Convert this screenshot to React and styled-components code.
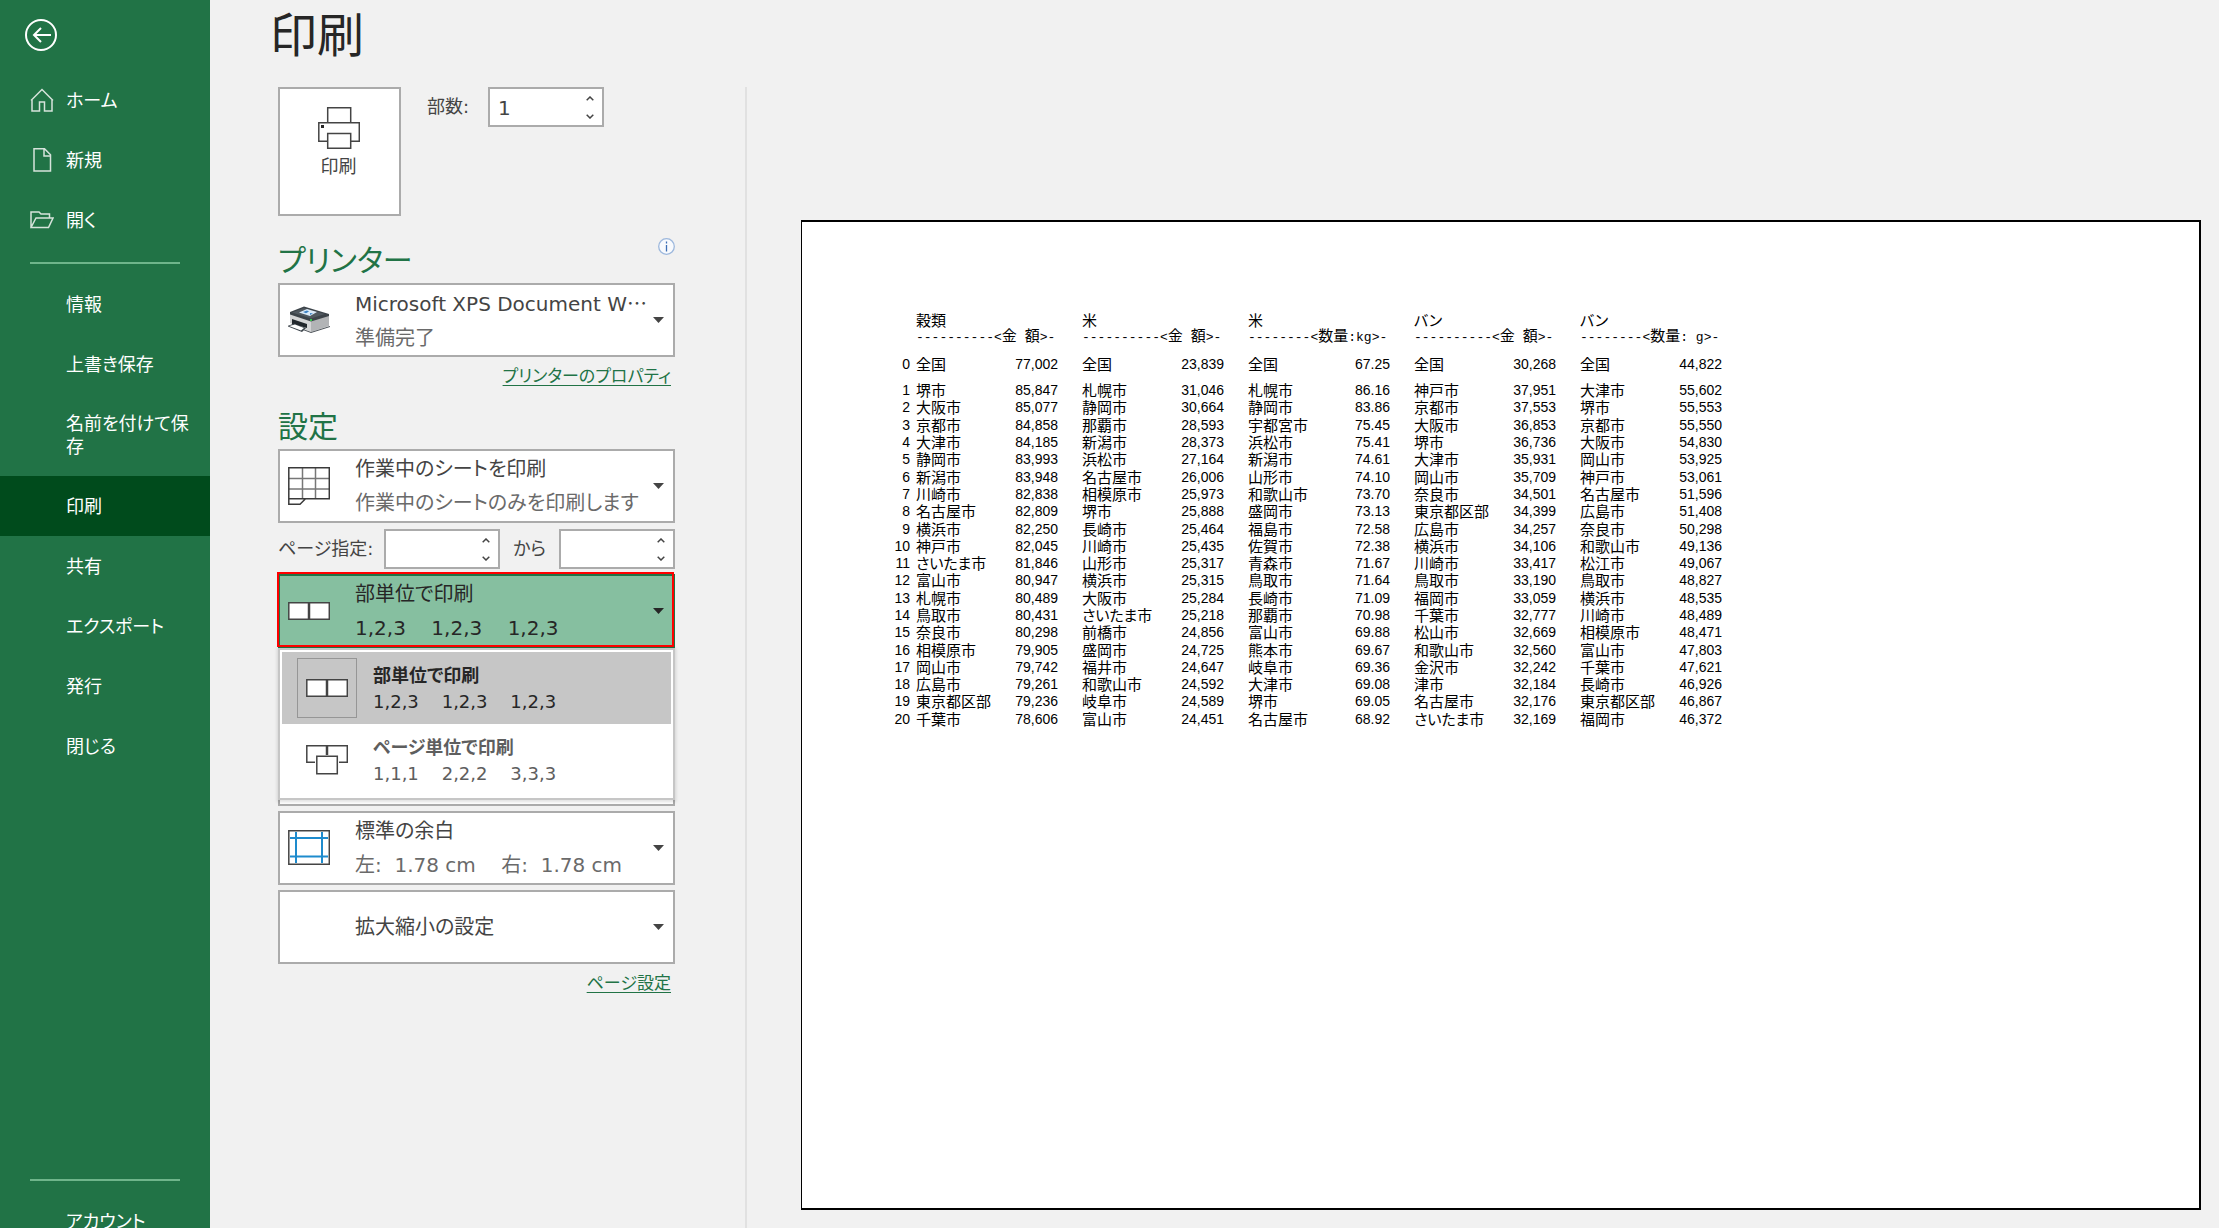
import React, { useState } from "react";
import styled, { createGlobalStyle, css } from "styled-components";

const GlobalStyle = createGlobalStyle`
  * {
    box-sizing: border-box;
  }

  body {
    margin: 0;
    background: #f1f1f1;
    color: #444444;
    font-family: "DejaVu Sans", "Noto Sans CJK JP", sans-serif;
    font-feature-settings: "palt";
  }

  button,
  input {
    font: inherit;
    font-feature-settings: inherit;
    color: inherit;
    margin: 0;
  }
`;

const Page = styled.div`
  display: flex;
  height: 100vh;
  overflow: hidden;
`;

/* ---------- sidebar ---------- */

const Sidebar = styled.nav`
  display: flex;
  flex-direction: column;
  flex: 0 0 210px;
  background: #217346;
  color: #ffffff;
  font-size: 18px;
`;

const BackButton = styled.button`
  width: 32px;
  height: 32px;
  margin: 19px 0 19px 25px;
  padding: 0;
  border: 0;
  background: none;
`;

const NavItem = styled.button`
  display: flex;
  align-items: center;
  width: 100%;
  min-height: 60px;
  padding: 18px 16px 18px 30px;
  border: 0;
  background: ${(props) => (props.$active ? "#004b1c" : "transparent")};
  line-height: 23px;
  text-align: left;
  word-break: break-all;
`;

const NavIcon = styled.span`
  display: flex;
  flex: 0 0 36px;
`;

const NavLine = styled.hr`
  flex: none;
  height: 2px;
  width: 150px;
  margin: 12px 0 10px 30px;
  border: 0;
  background: #6fb58b;
`;

const NavFooter = styled.div`
  margin-top: auto;
  margin-bottom: -23px;
`;

/* ---------- settings column ---------- */

const Main = styled.main`
  display: flex;
  flex-direction: column;
  flex: 1;
  min-width: 0;
`;

const Title = styled.h1`
  margin: 0;
  padding: 0 60px;
  height: 87px;
  color: #262626;
  font-size: 47px;
  font-weight: 400;
  line-height: 72px;
`;

const Columns = styled.div`
  display: flex;
  flex: 1;
  min-height: 0;
`;

const Settings = styled.section`
  flex: 0 0 537px;
  padding: 0 70px 0 68px;
  border-right: 2px solid #e1e1e1;
`;

const PrintRow = styled.div`
  display: flex;
  align-items: flex-start;
`;

const PrintButton = styled.button`
  display: flex;
  flex-direction: column;
  align-items: center;
  width: 123px;
  height: 129px;
  padding: 18px 2px 0 0;
  border: 2px solid #ababab;
  background: #ffffff;
  font-size: 18px;
  line-height: 36px;
`;

const FieldLabel = styled.label`
  font-size: 18px;
  line-height: 40px;
`;

const CopiesLabel = styled(FieldLabel)`
  width: 61px;
  margin-left: 26px;
`;

const RangeLabel = styled(FieldLabel)`
  flex: 0 0 106px;
`;

const ToLabel = styled(FieldLabel)`
  flex: 1;
  text-align: center;
`;

const SpinBox = styled.span`
  display: flex;
  width: 116px;
  height: 40px;
  border: 2px solid #ababab;
  background: #ffffff;
`;

const SpinInput = styled.input`
  flex: 1;
  min-width: 0;
  padding: 2px 8px 0;
  border: 0;
  outline: 0;
  background: none;
  font-size: 20px;
`;

const SpinButtons = styled.span`
  display: flex;
  flex-direction: column;
  width: 24px;
`;

const SpinButton = styled.button`
  display: flex;
  flex: 1;
  align-items: center;
  justify-content: center;
  padding: 0;
  border: 0;
  background: none;
`;

const HeadingRow = styled.div`
  display: flex;
  align-items: flex-start;
  justify-content: space-between;
  margin-top: ${(props) => (props.$tight ? "15px" : "22px")};
`;

const Heading = styled.h2`
  margin: 0;
  color: #217346;
  font-size: 30px;
  font-weight: 400;
  line-height: 45px;
`;

const InfoButton = styled.button`
  display: flex;
  padding: 0;
  border: 0;
  background: none;
`;

const LinkRow = styled.div`
  display: flex;
  justify-content: flex-end;
  padding: 6px 4px 0 0;
`;

const GreenLink = styled.a`
  color: #217346;
  font-size: 17px;
  line-height: 26px;
  text-decoration: underline;
  text-underline-offset: 3px;
`;

const Stack = styled.div`
  display: flex;
  flex-direction: column;
  gap: 5px;
`;

const PickerWrap = styled.div`
  position: relative;
`;

const Picker = styled.button`
  display: flex;
  align-items: center;
  width: 100%;
  height: 74px;
  padding: 0 9px 0 8px;
  border: 2px solid #ababab;
  background: #ffffff;
  text-align: left;
  ${(props) =>
    props.$open &&
    css`
      border-color: #217346;
      background: #86bfa0;
      color: #262626;

      &::after {
        content: "";
        position: absolute;
        inset: -2px 1px 1px -1px;
        border: 2px solid #ff0000;
      }
    `}
`;

const PickerIcon = styled.span`
  display: flex;
  flex: 0 0 67px;
`;

const PickerText = styled.span`
  flex: 1;
  min-width: 0;
  font-size: 20px;
  line-height: 34px;
  white-space: pre;
`;

const PickerTitle = styled.span`
  display: block;
`;

const PickerNote = styled.span`
  display: block;
  color: ${(props) => (props.$open ? "#262626" : "#6a6a6a")};
`;

const Ellipsis = styled.span`
  font-family: "Noto Sans CJK JP", sans-serif;
`;

const PageRange = styled.div`
  display: flex;
  padding-top: 1px;
`;

const Menu = styled.ul`
  position: absolute;
  top: 100%;
  left: 0;
  right: 0;
  z-index: 1;
  margin: 0;
  padding: 2px;
  border: 2px solid #c6c6c6;
  background: #ffffff;
  box-shadow: 0 1px 3px 1px rgba(0, 0, 0, 0.12);
  list-style: none;
`;

const MenuItem = styled.button`
  display: flex;
  align-items: center;
  width: 100%;
  height: 72px;
  padding: 0 15px;
  border: 0;
  background: ${(props) => (props.$selected ? "#c6c6c6" : "#ffffff")};
  color: ${(props) => (props.$selected ? "#262626" : "#5e5e5e")};
  font-size: 18px;
  line-height: 26px;
  text-align: left;
  white-space: pre;
`;

const MenuIcon = styled.span`
  display: flex;
  align-items: center;
  justify-content: center;
  width: 60px;
  height: 60px;
  margin-right: 16px;
  border: 1px solid
    ${(props) => (props.$selected ? "#969696" : "transparent")};
`;

const MenuText = styled.span`
  padding-top: 2px;
`;

const MenuTitle = styled.span`
  display: block;
  font-weight: 700;
`;

/* ---------- preview ---------- */

const Preview = styled.section`
  display: flex;
  flex: 1;
  min-width: 0;
  padding: 133px 18px 18px 54px;
`;

const Paper = styled.div`
  flex: 1;
  padding: 90px 0 0 84px;
  border: solid #000000;
  border-width: 2px 2px 2px 1px;
  background: #ffffff;
`;

const Sheet = styled.table`
  border-collapse: collapse;
  color: #000000;
  font-family: "Liberation Sans", "Noto Sans CJK JP", sans-serif;
  font-size: 15px;
  line-height: 17px;
  white-space: pre;
`;

const Rows = styled.tbody`
  height: 346px;
`;

const TotalRow = styled.tr`
  height: 36px;
`;

const IndexCell = styled.th`
  width: 24px;
  padding: 0;
  font-size: 14px;
  font-weight: 400;
  text-align: right;
`;

const NameCell = styled.td`
  width: 102px;
  padding: 0 0 0 6px;
`;

const ValueCell = styled.td`
  width: 46px;
  padding: 0;
  font-size: 14px;
  text-align: right;
`;

const SpacerCell = styled.td`
  width: 18px;
  padding: 0;
`;

const GroupHead = styled.th`
  padding: 0 0 0 6px;
  font-weight: 400;
  text-align: left;
`;

const RuleHead = styled(GroupHead)`
  font-family: "Liberation Mono", "Noto Sans CJK JP", monospace;
  font-size: 13px;
`;

const Kanji = styled.span`
  font-size: 15px;
`;

/* ---------- icons ---------- */

const BackIcon = () => (
  <svg width="32" height="32" fill="none" stroke="#fff" strokeWidth="2">
    <circle cx="16" cy="16" r="15" />
    <path d="M26 16H9M16 9l-7 7 7 7" />
  </svg>
);

const HomeIcon = () => (
  <svg width="24" height="24" fill="none" stroke="#d6e3db" strokeWidth="1.5">
    <path d="M1 12.5 12 1.5l11 11M2 11.5V23h7.5V14h5v9H22V11.5" />
  </svg>
);

const NewIcon = () => (
  <svg width="24" height="24" fill="none" stroke="#d6e3db" strokeWidth="1.5">
    <path d="M4 .8h10.5l6 6V23H4zM14 1v7h6.5" />
  </svg>
);

const OpenIcon = () => (
  <svg width="24" height="18" fill="none" stroke="#d6e3db" strokeWidth="1.5">
    <path d="M1 16V1h8l2 2h8.500v4M1 16.500 6 7h17l-4.500 9.500z" />
  </svg>
);

const PrintIcon = () => (
  <svg width="42" height="42" fill="#fff" stroke="#444" strokeWidth="1.5">
    <path d="M9.700 16V.8h23V16" />
    <path d="M.8 15.700h40.500v18.500H.8z" />
    <path d="M9.700 26.500h23v14.700h-23z" />
    <path d="M3 18h3v3H3z" fill="#262626" stroke="none" />
  </svg>
);

const DeviceIcon = () => (
  <svg width="44" height="28" viewBox="2 0 44 28">
    <path d="M4 8v9l21 9V14z" fill="#d4d5d6" />
    <path d="M25 14v12l18-6V9z" fill="#b2b4b6" />
    <path d="m25 26 19-6v1l-19 6-8-3v-1z" fill="#4a5056" />
    <path d="M4 6 18 .5 43 8v2l-18 5.500L4 8.500z" fill="#3c4349" />
    <path d="m6 6.500 12-4.500 21 6-14 4.500z" fill="#50585f" />
    <path d="m13 6.500 8-3.500 10 3-7 4z" fill="#dbeaf8" />
    <path d="m17 6 4-1.500 2 1-3 1.700zM24 7l3 .5-3 1.500z" fill="#3d82c4" />
    <path d="M6 13v5l15 4v-4z" fill="#22282d" />
    <path d="m1 20 7-2.500 12 4.500-4 4z" fill="#3a4249" />
    <path d="m3 20 6-1.500 9 3.500-3 2.500z" fill="#fff" />
    <path d="M24 13h2v2h-2z" fill="#35c44a" />
  </svg>
);

const SheetIcon = () => (
  <svg width="42" height="38" fill="none" strokeWidth="1.5">
    <path d="M14.500 1v31M27.500 1v31M1 11.500h40M1 22h40" stroke="#777" />
    <path d="M.8 .8h40.500v31H.8zM.8 32v5.200H12l5.500-5.500" stroke="#3a3a3a" />
  </svg>
);

const CollatedIcon = () => (
  <svg width="42" height="18" fill="#fff" stroke="#444" strokeWidth="1.5">
    <path d="M.8 .8h40.500v16.500H.8z" />
    <path d="M21 1v16" strokeWidth="2.5" />
  </svg>
);

const UncollatedIcon = () => (
  <svg width="42" height="30" fill="#fff" stroke="#444" strokeWidth="1.5">
    <path d="M9 17.200H.8V.8h40.500v16.500H33" />
    <path d="M21 1v9" strokeWidth="2.5" />
    <path d="M10.800 11.300h20.500v17.500H10.800z" />
  </svg>
);

const MarginsIcon = () => (
  <svg width="42" height="36" fill="none" strokeWidth="1.5">
    <path d="M8 2v31M34 2v31M2 8h38M2 26.500h38" stroke="#1e8bcd" strokeWidth="2" />
    <path d="M.8 .8h40.500v33.500H.8z" stroke="#444" />
  </svg>
);

const InfoIcon = () => (
  <svg width="17" height="17" fill="none" stroke="#9db8dd">
    <circle cx="8.5" cy="8.5" r="7.8" fill="#f8fafd" strokeWidth="1.3" />
    <path d="M8.500 3.500v2M8.500 7v6.500" stroke="#3c6eb4" strokeWidth="1.3" />
  </svg>
);

const CaretIcon = () => (
  <svg width="11" height="6">
    <path d="M0 0h11L5.500 6z" fill="currentColor" />
  </svg>
);

const ChevronIcon = ({ up }) => (
  <svg width="8" height="5" fill="none" stroke="#444" strokeWidth="1.5">
    <path d={up ? "M.7 4.300 4 1l3.300 3.300" : "M.7 .7 4 4 7.300 .7"} />
  </svg>
);

/* ---------- data ---------- */

const mainNav = [
  { label: "ホーム", icon: <HomeIcon /> },
  { label: "新規", icon: <NewIcon /> },
  { label: "開く", icon: <OpenIcon /> },
];

const fileNav = [
  "情報",
  "上書き保存",
  "名前を付けて保存",
  "印刷",
  "共有",
  "エクスポート",
  "発行",
  "閉じる",
];

const collateOptions = [
  {
    title: "部単位で印刷",
    note: "1,2,3    1,2,3    1,2,3",
    icon: <CollatedIcon />,
  },
  {
    title: "ページ単位で印刷",
    note: "1,1,1    2,2,2    3,3,3",
    icon: <UncollatedIcon />,
  },
];

const groups = [
  { name: "穀類", rule: ["----------<", "金", " ", "額", ">-"] },
  { name: "米", rule: ["----------<", "金", " ", "額", ">-"] },
  { name: "米", rule: ["--------<", "数量", ":kg>-"] },
  { name: "バン", rule: ["----------<", "金", " ", "額", ">-"] },
  { name: "バン", rule: ["--------<", "数量", ": g>-"] },
];

const total = "全国 77,002 全国 23,839 全国 67.25 全国 30,268 全国 44,822";

const ranking = [
  "堺市 85,847 札幌市 31,046 札幌市 86.16 神戸市 37,951 大津市 55,602",
  "大阪市 85,077 静岡市 30,664 静岡市 83.86 京都市 37,553 堺市 55,553",
  "京都市 84,858 那覇市 28,593 宇都宮市 75.45 大阪市 36,853 京都市 55,550",
  "大津市 84,185 新潟市 28,373 浜松市 75.41 堺市 36,736 大阪市 54,830",
  "静岡市 83,993 浜松市 27,164 新潟市 74.61 大津市 35,931 岡山市 53,925",
  "新潟市 83,948 名古屋市 26,006 山形市 74.10 岡山市 35,709 神戸市 53,061",
  "川崎市 82,838 相模原市 25,973 和歌山市 73.70 奈良市 34,501 名古屋市 51,596",
  "名古屋市 82,809 堺市 25,888 盛岡市 73.13 東京都区部 34,399 広島市 51,408",
  "横浜市 82,250 長崎市 25,464 福島市 72.58 広島市 34,257 奈良市 50,298",
  "神戸市 82,045 川崎市 25,435 佐賀市 72.38 横浜市 34,106 和歌山市 49,136",
  "さいたま市 81,846 山形市 25,317 青森市 71.67 川崎市 33,417 松江市 49,067",
  "富山市 80,947 横浜市 25,315 鳥取市 71.64 鳥取市 33,190 鳥取市 48,827",
  "札幌市 80,489 大阪市 25,284 長崎市 71.09 福岡市 33,059 横浜市 48,535",
  "鳥取市 80,431 さいたま市 25,218 那覇市 70.98 千葉市 32,777 川崎市 48,489",
  "奈良市 80,298 前橋市 24,856 富山市 69.88 松山市 32,669 相模原市 48,471",
  "相模原市 79,905 盛岡市 24,725 熊本市 69.67 和歌山市 32,560 富山市 47,803",
  "岡山市 79,742 福井市 24,647 岐阜市 69.36 金沢市 32,242 千葉市 47,621",
  "広島市 79,261 和歌山市 24,592 大津市 69.08 津市 32,184 長崎市 46,926",
  "東京都区部 79,236 岐阜市 24,589 堺市 69.05 名古屋市 32,176 東京都区部 46,867",
  "千葉市 78,606 富山市 24,451 名古屋市 68.92 さいたま市 32,169 福岡市 46,372",
];

/* ---------- parts ---------- */

const Spinner = ({ id, initial = "" }) => {
  const [value, setValue] = useState(initial);
  const step = (by) => setValue(String(Math.max(1, Number(value) + by)));

  return (
    <SpinBox>
      <SpinInput
        id={id}
        value={value}
        onChange={(e) => setValue(e.target.value)}
      />
      <SpinButtons>
        <SpinButton aria-label="増やす" onClick={() => step(1)}>
          <ChevronIcon up />
        </SpinButton>
        <SpinButton aria-label="減らす" onClick={() => step(-1)}>
          <ChevronIcon />
        </SpinButton>
      </SpinButtons>
    </SpinBox>
  );
};

const SettingPicker = ({ icon, title, note, open, onClick }) => (
  <Picker $open={open} aria-haspopup="listbox" onClick={onClick}>
    <PickerIcon>{icon}</PickerIcon>
    <PickerText>
      <PickerTitle>{title}</PickerTitle>
      {note && <PickerNote $open={open}>{note}</PickerNote>}
    </PickerText>
    <CaretIcon />
  </Picker>
);

const SheetRow = ({ as: Row = "tr", index, line }) => {
  const cells = line.split(" ");

  return (
    <Row>
      <IndexCell scope="row">{index}</IndexCell>
      {groups.map((group, i) => (
        <React.Fragment key={i}>
          <NameCell>{cells[i * 2]}</NameCell>
          <ValueCell>{cells[i * 2 + 1]}</ValueCell>
          <SpacerCell />
        </React.Fragment>
      ))}
    </Row>
  );
};

const SheetTable = () => (
  <Sheet>
    <thead>
      <tr>
        <td />
        {groups.map((group, i) => (
          <GroupHead key={i} colSpan={3}>
            {group.name}
          </GroupHead>
        ))}
      </tr>
      <tr>
        <td />
        {groups.map((group, i) => (
          <RuleHead key={i} colSpan={3}>
            {group.rule.map((part, j) =>
              j % 2 ? <Kanji key={j}>{part}</Kanji> : part
            )}
          </RuleHead>
        ))}
      </tr>
      <SheetRow as={TotalRow} index={0} line={total} />
    </thead>
    <Rows>
      {ranking.map((line, i) => (
        <SheetRow key={i} index={i + 1} line={line} />
      ))}
    </Rows>
  </Sheet>
);

const App = () => {
  const [active, setActive] = useState("印刷");
  const [menuOpen, setMenuOpen] = useState(true);
  const [collate, setCollate] = useState(0);
  const current = collateOptions[collate];

  return (
    <Page lang="ja">
      <GlobalStyle />
      <Sidebar>
        <BackButton aria-label="戻る">
          <BackIcon />
        </BackButton>
        {mainNav.map((item) => (
          <NavItem key={item.label}>
            <NavIcon>{item.icon}</NavIcon>
            {item.label}
          </NavItem>
        ))}
        <NavLine />
        {fileNav.map((label) => (
          <NavItem
            key={label}
            $active={label === active}
            onClick={() => setActive(label)}
          >
            <NavIcon />
            {label}
          </NavItem>
        ))}
        <NavFooter>
          <NavLine />
          <NavItem>
            <NavIcon />
            アカウント
          </NavItem>
        </NavFooter>
      </Sidebar>

      <Main>
        <Title>印刷</Title>
        <Columns>
          <Settings>
            <PrintRow>
              <PrintButton>
                <PrintIcon />
                印刷
              </PrintButton>
              <CopiesLabel htmlFor="copies">部数:</CopiesLabel>
              <Spinner id="copies" initial="1" />
            </PrintRow>

            <HeadingRow>
              <Heading>プリンター</Heading>
              <InfoButton aria-label="プリンターの状態">
                <InfoIcon />
              </InfoButton>
            </HeadingRow>
            <SettingPicker
              icon={<DeviceIcon />}
              title={
                <>
                  Microsoft XPS Document W<Ellipsis>…</Ellipsis>
                </>
              }
              note="準備完了"
            />
            <LinkRow>
              <GreenLink href="#printer">プリンターのプロパティ</GreenLink>
            </LinkRow>

            <HeadingRow $tight>
              <Heading>設定</Heading>
            </HeadingRow>
            <Stack>
              <SettingPicker
                icon={<SheetIcon />}
                title="作業中のシートを印刷"
                note="作業中のシートのみを印刷します"
              />
              <PageRange>
                <RangeLabel htmlFor="from">ページ指定:</RangeLabel>
                <Spinner id="from" />
                <ToLabel htmlFor="to">から</ToLabel>
                <Spinner id="to" />
              </PageRange>
              <PickerWrap>
                <SettingPicker
                  icon={<CollatedIcon />}
                  title={current.title}
                  note={current.note}
                  open={menuOpen}
                  onClick={() => setMenuOpen(!menuOpen)}
                />
                {menuOpen && (
                  <Menu>
                    {collateOptions.map((option, i) => (
                      <li key={option.title}>
                        <MenuItem
                          $selected={i === collate}
                          onClick={() => setCollate(i)}
                        >
                          <MenuIcon $selected={i === collate}>
                            {option.icon}
                          </MenuIcon>
                          <MenuText>
                            <MenuTitle>{option.title}</MenuTitle>
                            {option.note}
                          </MenuText>
                        </MenuItem>
                      </li>
                    ))}
                  </Menu>
                )}
              </PickerWrap>
              <SettingPicker />
              <SettingPicker />
              <SettingPicker
                icon={<MarginsIcon />}
                title="標準の余白"
                note="左:  1.78 cm    右:  1.78 cm"
              />
              <SettingPicker title="拡大縮小の設定" />
            </Stack>
            <LinkRow>
              <GreenLink href="#page">ページ設定</GreenLink>
            </LinkRow>
          </Settings>

          <Preview>
            <Paper>
              <SheetTable />
            </Paper>
          </Preview>
        </Columns>
      </Main>
    </Page>
  );
};

export default App;
